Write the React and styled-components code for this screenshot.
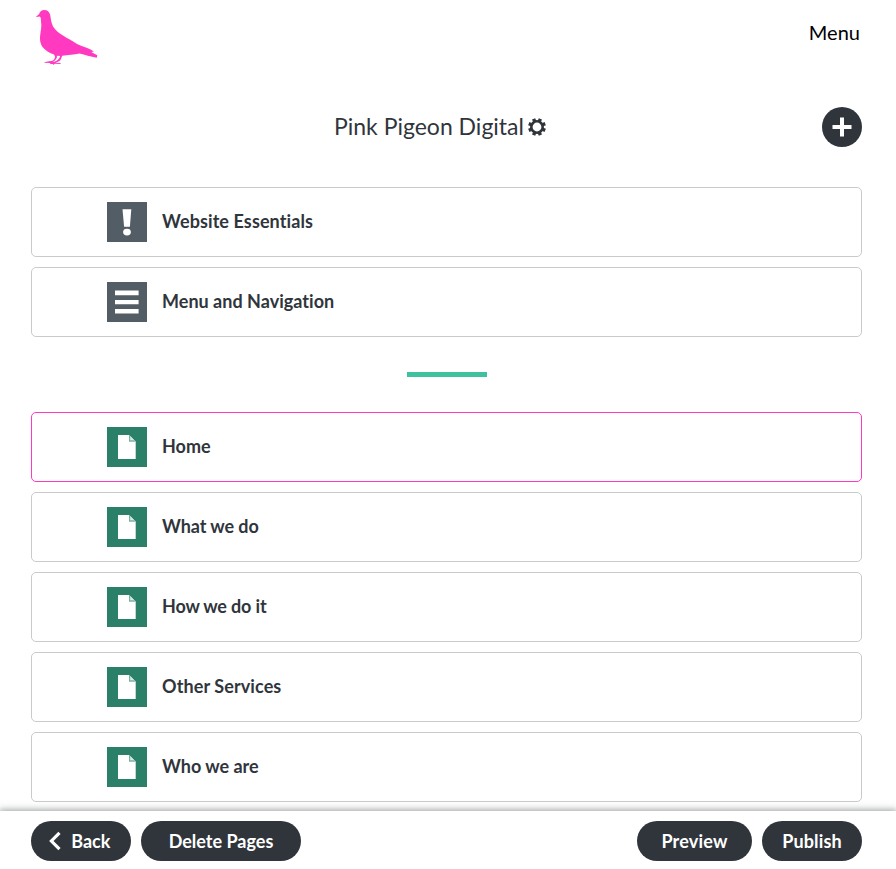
import React from 'react';
import styled, { createGlobalStyle } from 'styled-components';

const GlobalStyle = createGlobalStyle`
  *, *::before, *::after { box-sizing: border-box; }
  body { margin: 0; background: #fff; }
`;

const Page = styled.div`
  display: flex;
  flex-direction: column;
  height: 869px;
  overflow: hidden;
  font-family: 'Lato', sans-serif;
  font-variant-ligatures: none;
  color: #30353c;
  background: #fff;
`;

const TopBar = styled.header`
  display: flex;
  justify-content: space-between;
  align-items: flex-start;
  flex: none;
  height: 97px;
  padding: 8px 36px 0 35px;
`;

const Logo = styled.svg`
  display: block;
  width: 64px;
  height: 58px;
`;

const MenuLink = styled.a`
  margin-top: 11px;
  font-size: 20px;
  line-height: 26px;
  color: #000;
`;

const TitleRow = styled.div`
  display: grid;
  grid-template-columns: 40px 1fr 40px;
  align-items: center;
  flex: none;
  height: 60px;
  padding: 0 34px 0 18px;
`;

const Title = styled.h1`
  grid-column: 2;
  display: flex;
  justify-content: center;
  align-items: center;
  gap: 4px;
  margin: -2px 0 0;
  font-size: 23px;
  line-height: 30px;
  font-weight: 400;
`;

const Gear = styled.svg`
  display: block;
  flex: none;
  width: 18px;
  height: 18px;
  margin-top: 2px;
`;

const AddButton = styled.button`
  display: grid;
  place-items: center;
  width: 40px;
  height: 40px;
  padding: 0;
  border: 0;
  border-radius: 50%;
  background: #30353c;
`;

const Content = styled.main`
  flex: 1;
  min-height: 0;
  padding: 30px 34px 0 31px;
`;

const List = styled.section`
  display: flex;
  flex-direction: column;
  gap: 10px;
`;

const Row = styled.div`
  display: flex;
  align-items: center;
  gap: 15px;
  height: 70px;
  padding: 0 75px;
  border: 1px solid ${(p) => (p.$active ? '#ff3ac1' : '#c9cbcb')};
  border-radius: 5px;
`;

const Tile = styled.span`
  display: block;
  width: 40px;
  height: 40px;
  background: ${(p) => p.$color};

  svg { display: block; }
`;

const Label = styled.span`
  font-size: 18px;
  line-height: 24px;
  font-weight: 700;
  letter-spacing: ${(p) => p.$tracking || 0}px;
  margin-top: -2px;
`;

const Divider = styled.hr`
  width: 80px;
  height: 5px;
  margin: 35px auto;
  border: 0;
  background: #3fc1a0;
`;

const Footer = styled.footer`
  position: relative;
  display: flex;
  gap: 10px;
  flex: none;
  height: 58px;
  padding: 10px 34px 0 31px;
  background: #fff;
  box-shadow: 0 0 7px 1px rgba(47, 60, 55, 0.5);
`;

const Spacer = styled.div`
  flex: 1;
`;

const Pill = styled.button`
  display: flex;
  justify-content: center;
  align-items: center;
  gap: 10px;
  width: ${(p) => p.$width}px;
  height: 40px;
  padding: 0 ${(p) => p.$inset || 0}px 0 0;
  border: 0;
  border-radius: 20px;
  background: #30353c;
  color: #fff;
  font: 700 18px/24px 'Lato', sans-serif;
  letter-spacing: ${(p) => p.$tracking || 0}px;
`;

const Pigeon = () => (
  <Logo viewBox="35 8 64 58" fill="#ff3ac1" aria-label="Pink Pigeon">
    <path d="M36 16.8 L39.2 14 C39.4 11.5 41.5 10 44.2 9.9 C47.3 9.9 49.6 11.7 50.2 15 C50.8 18.5 51.2 22.8 53 26.4 C55.6 30.6 59.3 33.1 63 35.5 C67.5 38.4 73 41.1 77.5 44.2 C83 46.7 89 48.2 94 51.4 L91.3 52 C93.5 53.2 95.5 54.1 97.3 55.3 L96.8 57.8 C90.5 56.9 84.8 54.6 79.5 53.6 C74 54.4 68 55.4 62.3 55.8 C61.4 57.3 61.2 59.1 60 60.6 C58.8 61.7 57 62.3 55.5 62.7 L60.7 63 L60.4 63.9 L54.8 63.8 L53 65 L52.9 64 L50 64.1 L50.3 63.1 L44.1 63.1 L45 62.3 L49.8 62.1 L45 61.4 L51.8 61.1 C53.9 60.2 55 58.2 55.1 56.4 L54 54.5 C49.6 53 45.1 50.6 42.3 46.8 C40.2 43.6 39.7 39.8 40.1 36 C40.6 31 42 26 41 21.4 C40.8 19 41.3 17.3 39.5 16.4 L36.5 17 Z" />
    <path d="M57 55.8 L60.1 56 C59.9 58.6 57.5 60.5 54.8 61.6 L52.6 62.2 C55.4 60.4 57.3 58.5 57 55.8Z" fill="#fff" />
  </Logo>
);

const GearIcon = () => (
  <Gear viewBox="-9 -9 18 18" fill="none" stroke="#30353c">
    <circle r="5.7" strokeWidth="2.6" />
    {[22.5, 67.5, 112.5, 157.5, 202.5, 247.5, 292.5, 337.5].map((angle) => (
      <path key={angle} d="M0 -6V-8.9" strokeWidth="3.4" transform={`rotate(${angle})`} />
    ))}
  </Gear>
);

const icons = {
  alert: (
    <svg viewBox="0 0 40 40" fill="#fff">
      <path d="M15.5 7.2H24.3L22.9 24.7H17.1Z" />
      <ellipse cx="20" cy="30.1" rx="3.9" ry="3.4" />
    </svg>
  ),
  menu: (
    <svg viewBox="0 0 40 40" fill="#fff">
      <path d="M8 8.6H31.6V13.3H8ZM8 17.9H31.6V22.3H8ZM8 27.1H31.6V31.4H8Z" />
    </svg>
  ),
  page: (
    <svg viewBox="0 0 40 40" fill="#fff">
      <path d="M11 8H22L28.7 14.6V32H11Z" />
      <path d="M22 8L28.7 14.7H22Z" fill="#78b09f" />
      <path d="M23.2 9L27.3 13.3H23.2Z" fill="#d7e9e3" />
    </svg>
  ),
};

const settings = [
  { label: 'Website Essentials', icon: 'alert', tracking: 0.1 },
  { label: 'Menu and Navigation', icon: 'menu', tracking: 0.02 },
];

const pages = [
  { label: 'Home' },
  { label: 'What we do', tracking: -0.08 },
  { label: 'How we do it', tracking: -0.16 },
  { label: 'Other Services', tracking: 0.1 },
  { label: 'Who we are', tracking: -0.02 },
];

export default function App() {
  return (
    <Page>
      <GlobalStyle />
      <TopBar>
        <Pigeon />
        <MenuLink>Menu</MenuLink>
      </TopBar>
      <TitleRow>
        <Title>
          Pink Pigeon Digital
          <GearIcon />
        </Title>
        <AddButton aria-label="Add page">
          <svg width="20" height="20" viewBox="0 0 20 20" stroke="#fff" strokeWidth="4">
            <path d="M10 0.5V19.5M0.5 10H19.5" />
          </svg>
        </AddButton>
      </TitleRow>
      <Content>
        <List>
          {settings.map(({ label, icon, tracking }) => (
            <Row key={label}>
              <Tile $color="#535d66">{icons[icon]}</Tile>
              <Label $tracking={tracking}>{label}</Label>
            </Row>
          ))}
        </List>
        <Divider />
        <List>
          {pages.map(({ label, tracking }, index) => (
            <Row key={label} $active={index === 0}>
              <Tile $color="#2a8069">{icons.page}</Tile>
              <Label $tracking={tracking}>{label}</Label>
            </Row>
          ))}
        </List>
      </Content>
      <Footer>
        <Pill $width={100} $inset={2.5}>
          <svg width="12" height="20" viewBox="0 0 12 20" fill="none" stroke="#fff" strokeWidth="3.2">
            <path d="M10.5 1.8L2.4 10L10.5 18.2" />
          </svg>
          Back
        </Pill>
        <Pill $width={160}>Delete Pages</Pill>
        <Spacer />
        <Pill $width={115} $tracking={0.2}>Preview</Pill>
        <Pill $width={100} $tracking={0.15}>Publish</Pill>
      </Footer>
    </Page>
  );
}
